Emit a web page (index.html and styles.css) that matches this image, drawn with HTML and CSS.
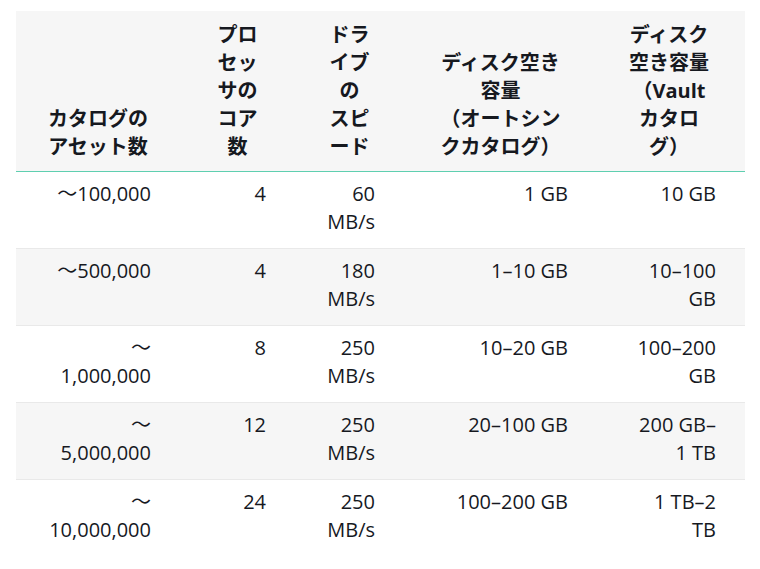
FILE: index.html
```html
<!DOCTYPE html>
<html lang="ja">
<head>
<meta charset="utf-8">
<link rel="stylesheet" href="styles.css">
</head>
<body>
<div class="wrap">
<table class="spec">
  <colgroup>
    <col class="c1"><col class="c2"><col class="c3"><col class="c4"><col class="c5">
  </colgroup>
  <thead>
    <tr>
      <th>カタログのアセット数</th>
      <th>プロセッサのコア数</th>
      <th>ドラ<br>イブ<br>の<br>スピ<br>ード</th>
      <th>ディスク空き<br>容量<br>（オートシン<br>クカタログ）</th>
      <th class="h5">ディスク<br>空き容量<br>（Vault<br>カタロ<br>グ）</th>
    </tr>
  </thead>
  <tbody>
    <tr><td>～100,000</td><td>4</td><td>60 MB/s</td><td>1 GB</td><td class="d5">10 GB</td></tr>
    <tr><td>～500,000</td><td>4</td><td>180 MB/s</td><td>1–10 GB</td><td class="d5">10–100 GB</td></tr>
    <tr><td>～1,000,000</td><td>8</td><td>250 MB/s</td><td>10–20 GB</td><td class="d5">100–200 GB</td></tr>
    <tr><td>～5,000,000</td><td>12</td><td>250 MB/s</td><td>20–100 GB</td><td class="d5">200 GB–1 TB</td></tr>
    <tr><td>～10,000,000</td><td>24</td><td>250 MB/s</td><td>100–200 GB</td><td class="d5">1 TB–2 TB</td></tr>
  </tbody>
</table>
</div>
</body>
</html>
```

FILE: styles.css
```css
html, body {
  margin: 0;
  padding: 0;
  background: #ffffff;
}

.wrap {
  padding: 11px 15px 0 16px;
}

.spec {
  border-collapse: collapse;
  table-layout: fixed;
  width: 729px;
  font-family: "Open Sans", "Noto Sans CJK JP", sans-serif;
  font-size: 20px;
  line-height: 28px;
  color: #16191f;
}

.c1 { width: 164px; }
.c2 { width: 115px; }
.c3 { width: 109px; }
.c4 { width: 193px; }
.c5 { width: 148px; }

.spec th {
  background: #f6f6f6;
  font-weight: 700;
  text-align: center;
  vertical-align: bottom;
  padding: 10px 29px 10px 29px;
  border-bottom: 1px solid #5fcfb0;
}

.spec th.h5 {
  padding-left: 27px;
  padding-right: 31px;
}

.spec td {
  text-align: right;
  vertical-align: top;
  padding: 8px 29px 12px 29px;
  border-bottom: 1px solid #e9e9e9;
}

.spec td.d5 {
  padding-left: 35px;
}

.spec tbody tr:nth-child(even) td {
  background: #f6f6f6;
}

.spec tbody tr:last-child td {
  border-bottom: none;
}
```
